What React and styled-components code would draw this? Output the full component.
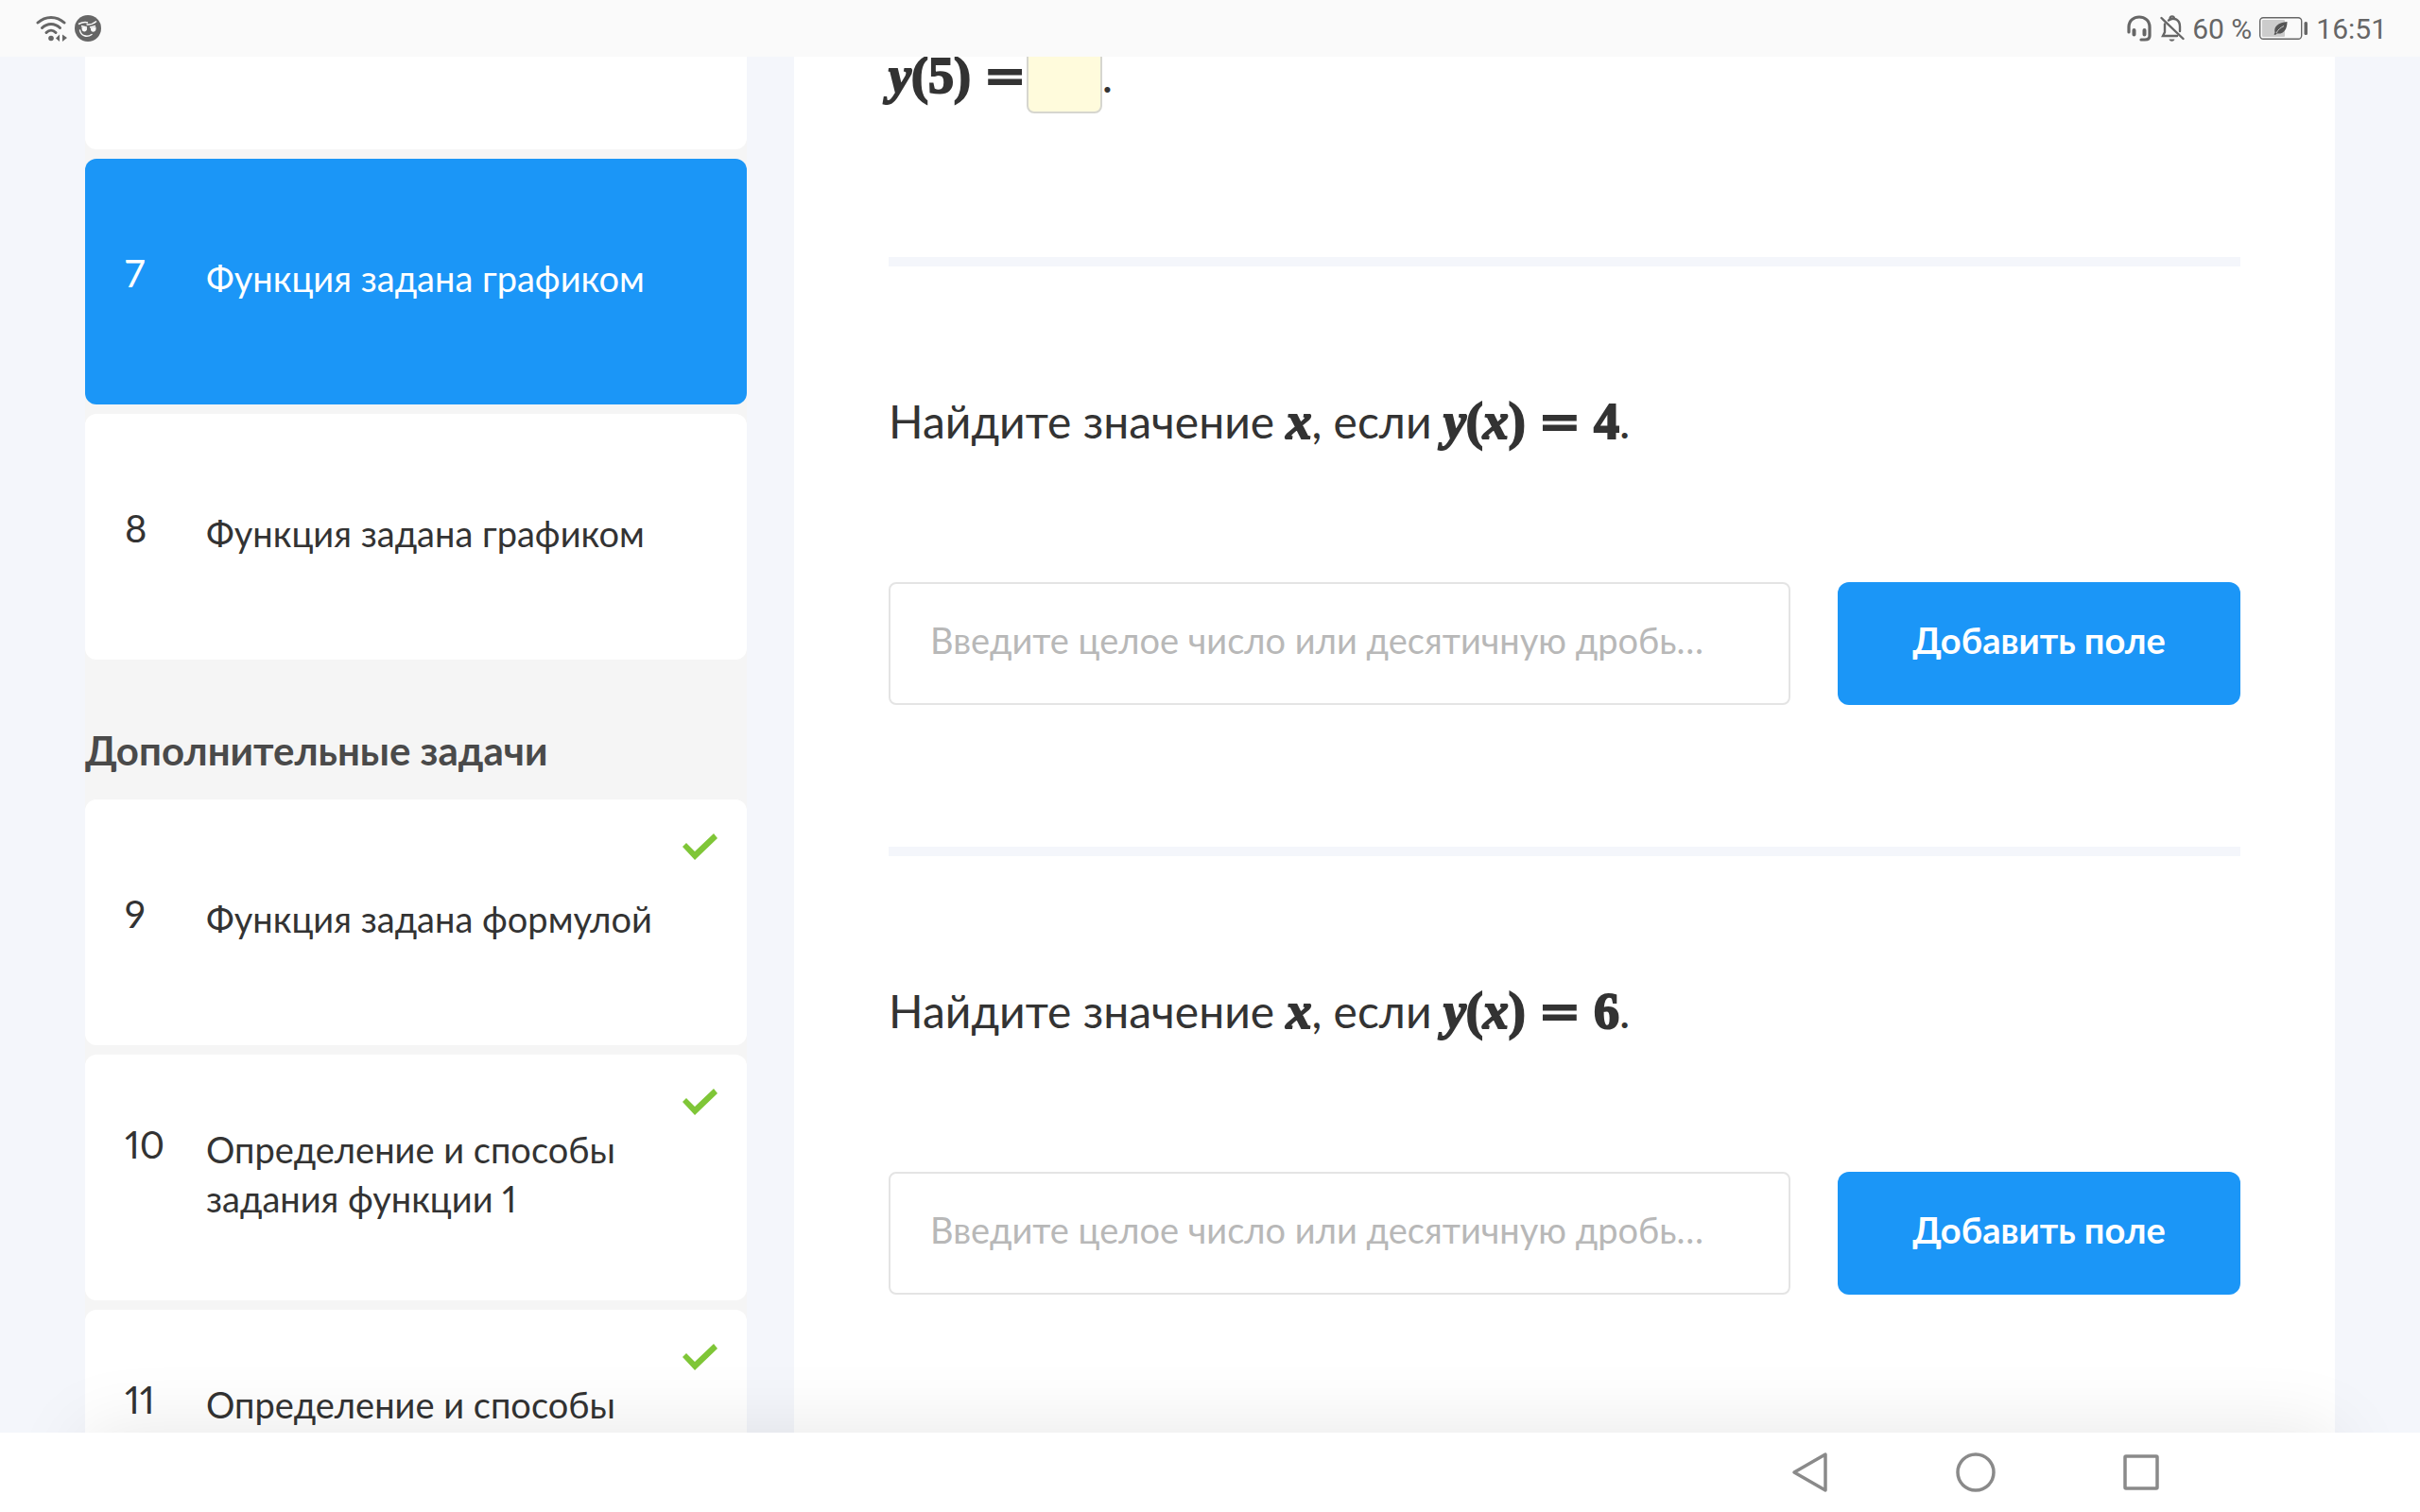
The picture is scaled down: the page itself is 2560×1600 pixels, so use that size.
import React from "react";
import styled, { createGlobalStyle } from "styled-components";

const GlobalStyle = createGlobalStyle`
  * {
    box-sizing: border-box;
  }

  body {
    margin: 0;
    background: #f4f6fb;
    color: #333;
    font-family: Lato, "Open Sans", sans-serif;
  }

  button,
  input {
    font-family: inherit;
  }
`;

const Screen = styled.div`
  height: 100vh;
  display: flex;
  flex-direction: column;
`;

const StatusBar = styled.header`
  height: 60px;
  flex-shrink: 0;
  display: flex;
  align-items: center;
  justify-content: space-between;
  padding: 0 35px 0 38px;
  background: #fafafa;
  color: #666;
  font-family: Roboto, sans-serif;
  font-size: 30px;
`;

const StatusGroup = styled.div`
  display: flex;
  align-items: center;
  gap: 8px;

  svg {
    display: block;
  }
`;

const Viewport = styled.div`
  position: relative;
  flex: 1;
  min-height: 0;
  overflow: hidden;
  display: flex;
  gap: 50px;
  padding: 0 90px;

  /* soft shade rising from the navigation bar */
  &::after {
    content: "";
    position: absolute;
    top: 100%;
    left: 90px;
    right: 90px;
    height: 200px;
    box-shadow: 0 0 80px rgba(0, 0, 0, 0.1);
    pointer-events: none;
  }
`;

const Sidebar = styled.nav`
  width: 700px;
  flex-shrink: 0;
  align-self: flex-start;
  background: #f5f5f5;
`;

const TaskList = styled.ul`
  list-style: none;
  margin: 0;
  padding: 0;
  display: flex;
  flex-direction: column;
  gap: 10px;
`;

const CutCard = styled.li`
  height: 98px;
  border-radius: 0 0 12px 12px;
  background: #fff;
`;

const Card = styled.a`
  position: relative;
  height: 260px;
  display: flex;
  align-items: center;
  padding: 0 42px 8px;
  border-radius: 12px;
  background: ${(props) => (props.$active ? "#1b96f7" : "#fff")};
  color: ${(props) => (props.$active ? "#fff" : "#333")};
  font-size: 38px;
  font-variant-numeric: proportional-nums;
  line-height: 52px;
  text-decoration: none;
`;

const CardBody = styled.span`
  display: flex;
  align-items: flex-start;
`;

const CardNumber = styled.span`
  width: 86px;
  flex-shrink: 0;
  font-size: 40px;
  line-height: 42px;
`;

const Done = styled.svg`
  position: absolute;
  top: 36px;
  right: 31px;
`;

const GroupTitle = styled.h2`
  margin: 0;
  padding: 66px 0 22px;
  color: #4a4a4a;
  font-size: 42px;
  line-height: 60px;
  font-weight: 700;
`;

const Main = styled.main`
  flex: 1;
  min-width: 0;
  padding: 0 100px;
  background: #fff;
`;

const Question = styled.label`
  display: block;
  font-size: 48px;
  line-height: 80px;
`;

const Answer = styled.div`
  display: flex;
  align-items: center;
  margin-top: -20px;
  padding-bottom: 152px;
  font-size: 48px;
  line-height: 80px;
`;

const Blank = styled.input`
  width: 80px;
  height: 80px;
  border: 2px solid #d6d6cf;
  border-radius: 8px;
  background: #fffbdc;
  font-size: 38px;
  text-align: center;
`;

const Formula = styled.span`
  font-family: "Liberation Serif", serif;
  font-size: 54px;
  line-height: 1;
  font-weight: 700;
  white-space: nowrap;
  -webkit-text-stroke: 2px #333;

  i {
    font-style: italic;
  }
`;

const Equals = styled.span`
  font-family: "DejaVu Sans", sans-serif;
  font-weight: 400;
  line-height: 1;
`;

const Task = styled.form`
  padding: 124px 0 150px;
  border-top: 10px solid #f4f6fb;
`;

const Fields = styled.div`
  display: flex;
  gap: 50px;
  margin-top: 130px;
`;

const Field = styled.input`
  flex: 1;
  min-width: 0;
  height: 130px;
  padding: 0 42px 8px;
  border: 2px solid #e4e4e4;
  border-radius: 8px;
  background: #fff;
  color: #333;
  font-size: 38px;

  &::placeholder {
    color: #b8b8b8;
    opacity: 1;
  }
`;

const AddButton = styled.button`
  width: 426px;
  height: 130px;
  padding: 0 0 8px;
  border: 0;
  border-radius: 12px;
  background: #1b96f7;
  color: #fff;
  font-size: 38px;
  font-weight: 700;
`;

const NavBar = styled.footer`
  height: 84px;
  flex-shrink: 0;
  display: flex;
  justify-content: flex-end;
  padding-right: 208px;
  background: #fff;
`;

const NavButton = styled.button`
  width: 175px;
  display: flex;
  align-items: center;
  justify-content: center;
  padding: 0;
  border: 0;
  background: none;
`;

const tasks = [
  { id: 7, title: "Функция задана графиком", active: true },
  { id: 8, title: "Функция задана графиком" },
];

const extraTasks = [
  { id: 9, title: "Функция задана формулой", done: true },
  { id: 10, title: "Определение и способы задания функции 1", done: true },
  { id: 11, title: "Определение и способы задания функции 2", done: true },
];

const WifiIcon = () => (
  <svg width="33" height="28" viewBox="0 0 33 28" fill="none">
    <g stroke="#666" strokeWidth="3" strokeLinecap="round">
      <path d="M2 8C10 0.500 22 0.500 30 8" />
      <path d="M6.500 13.500C12 8 20 8 25.500 13.500" />
      <path d="M11 18.500C14 15.500 18 15.500 21 18.500" />
    </g>
    <circle cx="16" cy="24.500" r="2.800" fill="#666" />
    <path d="M25 20.500V28L21 24.500ZM28 20.500V28L33 24Z" fill="#666" />
  </svg>
);

const FaceIcon = () => (
  <svg width="28" height="28" viewBox="0 0 28 28" fill="none">
    <circle cx="14" cy="14" r="14" fill="#666" />
    <path
      d="M4 9.500C8 7.500 11 7 14 8M12.500 10C17 10.500 20 9 23 6.500M7 11.500L13 13M16 13L22 11.500"
      stroke="#fafafa"
      strokeWidth="1.500"
    />
    <path
      d="M7.500 12.500L13 13.500V15C12.500 18.500 7.500 18.500 7.500 14ZM17 13.500L22.500 12.500V15C22 18.500 17 18.500 17 15Z"
      fill="#fafafa"
    />
    <path
      d="M5.500 16C6.500 22 13 24 18 20.500"
      stroke="#fafafa"
      strokeWidth="1.500"
      strokeLinecap="round"
    />
  </svg>
);

const HeadsetIcon = () => (
  <svg width="27" height="28" viewBox="0 0 27 28" fill="none">
    <path
      d="M2 18V12.500C2 -1.500 24 -1.500 24 12.500V22C24 25 22 26 19 26H15"
      stroke="#666"
      strokeWidth="3.200"
      strokeLinecap="round"
    />
    <path
      d="M7.500 16V20.500M18.500 16V20.500"
      stroke="#666"
      strokeWidth="4"
      strokeLinecap="round"
    />
  </svg>
);

const BellOffIcon = () => (
  <svg width="26" height="28" viewBox="0 0 26 28" fill="none">
    <g stroke="#666" strokeWidth="2.400" strokeLinecap="round">
      <path d="M1.500 3L24.500 25" />
      <path d="M5 9.500V18L3 22H18" />
      <path d="M9 5.500C15 1.500 21 5 21 12V17" />
      <path d="M10.500 4C10.500 0.500 15 0.500 15 4" />
    </g>
    <path d="M9.500 25.500H15.500C14.500 28.500 10.500 28.500 9.500 25.500Z" fill="#666" />
  </svg>
);

const BatteryIcon = () => (
  <svg width="52" height="24" viewBox="0 0 52 24" fill="none">
    <rect x="0.700" y="0.700" width="44" height="22.600" rx="3.500" stroke="#666" strokeWidth="1.400" />
    <rect x="3" y="3" width="24" height="18" rx="1" fill="#ccc" />
    <path
      d="M29.500 5C20 6 15 10 16.500 16.500L15.500 18.500L17 19L18.500 17.500C26 18.500 29.500 13 29.500 5Z"
      fill="#555"
    />
    <path d="M18 17C20 13 23 11 26 9.500" stroke="#ccc" />
    <rect x="47.500" y="5" width="3.500" height="14" rx="1.500" fill="#666" />
  </svg>
);

const TaskItem = ({ task }) => (
  <li>
    <Card href={`#task-${task.id}`} $active={task.active}>
      <CardBody>
        <CardNumber>{task.id}</CardNumber>
        <span>{task.title}</span>
      </CardBody>
      {task.done && (
        <Done width="37" height="28" viewBox="0 0 37 28">
          <path d="M0 14L4 10L13 19L33 0L37 5L13 28Z" fill="#7fc637" />
        </Done>
      )}
    </Card>
  </li>
);

const FindX = ({ value }) => (
  <Task onSubmit={(e) => e.preventDefault()}>
    <Question htmlFor={`x-${value}`}>
      Найдите значение{" "}
      <Formula>
        <i>x</i>
      </Formula>
      , если{" "}
      <Formula>
        <i>y</i>(<i>x</i>) <Equals>=</Equals> {value}
      </Formula>
      .
    </Question>
    <Fields>
      <Field
        id={`x-${value}`}
        type="text"
        placeholder="Введите целое число или десятичную дробь…"
      />
      <AddButton type="button">Добавить поле</AddButton>
    </Fields>
  </Task>
);

const App = () => {
  return (
    <Screen>
      <GlobalStyle />
      <StatusBar>
        <StatusGroup>
          <WifiIcon />
          <FaceIcon />
        </StatusGroup>
        <StatusGroup>
          <HeadsetIcon />
          <BellOffIcon />
          <span>60 %</span>
          <BatteryIcon />
          <span>16:51</span>
        </StatusGroup>
      </StatusBar>

      <Viewport>
        <Sidebar>
          <TaskList>
            <CutCard />
            {tasks.map((task) => (
              <TaskItem key={task.id} task={task} />
            ))}
          </TaskList>
          <GroupTitle>Дополнительные задачи</GroupTitle>
          <TaskList>
            {extraTasks.map((task) => (
              <TaskItem key={task.id} task={task} />
            ))}
          </TaskList>
        </Sidebar>

        <Main>
          <Answer>
            <Formula>
              <i>y</i>(5) <Equals>=</Equals>
            </Formula>
            <Blank type="text" aria-label="y(5)" />.
          </Answer>
          <FindX value={4} />
          <FindX value={6} />
        </Main>
      </Viewport>

      <NavBar>
        <NavButton aria-label="Назад">
          <svg width="40" height="44" viewBox="0 0 40 44" fill="none">
            <path d="M36 3V41L3 22Z" stroke="#8a8a8a" strokeWidth="3.500" strokeLinejoin="round" />
          </svg>
        </NavButton>
        <NavButton aria-label="Домой">
          <svg width="44" height="44" viewBox="0 0 44 44" fill="none">
            <circle cx="22" cy="22" r="19" stroke="#8a8a8a" strokeWidth="3.500" />
          </svg>
        </NavButton>
        <NavButton aria-label="Недавние">
          <svg width="44" height="44" viewBox="0 0 44 44" fill="none">
            <rect x="5" y="5" width="34" height="34" rx="1" stroke="#8a8a8a" strokeWidth="3.500" />
          </svg>
        </NavButton>
      </NavBar>
    </Screen>
  );
};

export default App;
